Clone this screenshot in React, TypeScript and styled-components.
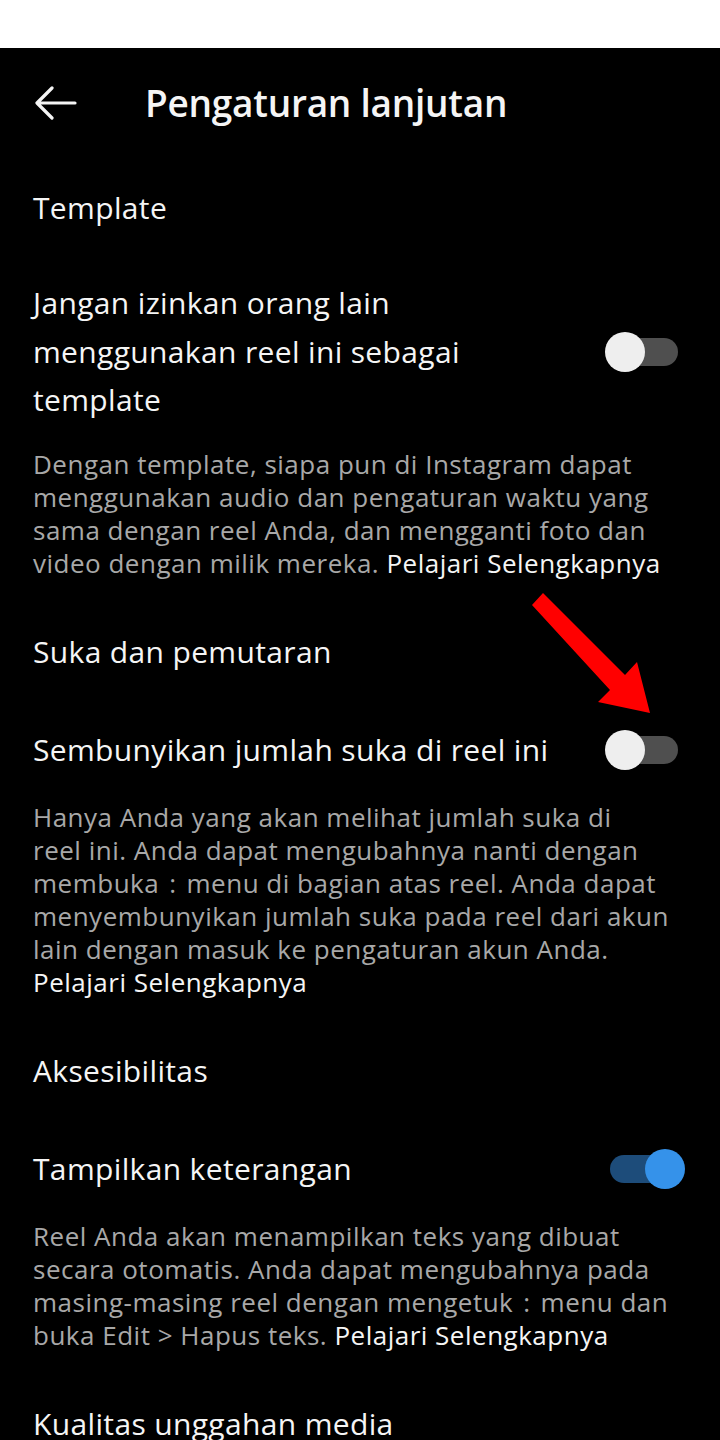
import React from "react";
import styled, { createGlobalStyle } from "styled-components";

const GlobalStyle = createGlobalStyle`
  html, body { margin: 0; padding: 0; background: #000; }
  body { font-family: "Open Sans", Roboto, "Noto Sans", sans-serif; -webkit-font-smoothing: antialiased; }
  * { box-sizing: border-box; }
`;

const Page = styled.div`
  position: relative;
  width: 720px;
  height: 1440px;
  overflow: hidden;
  background: #000;
  color: #f5f5f5;
`;

const StatusBar = styled.div`
  height: 48px;
  background: #fff;
`;

const Header = styled.header`
  height: 109px;
  display: flex;
  align-items: center;
  padding-left: 35px;
  gap: 68px;
`;

const BackButton = styled.button`
  display: flex;
  align-items: center;
  justify-content: center;
  width: 42px;
  height: 34px;
  padding: 0;
  border: 0;
  background: transparent;
  color: #f5f5f5;
`;

const Title = styled.h1`
  margin: 0;
  font-size: 37px;
  font-weight: 600;
  letter-spacing: -0.25px;
  line-height: 48px;
  color: #f5f5f5;
`;

const Content = styled.main`
  padding: 26px 42px 0 33px;
`;

const Section = styled.section`
  display: flex;
  flex-direction: column;
  & + & {
    margin-top: 47px;
  }
`;

const SectionTitle = styled.h2`
  margin: 0 0 47px;
  font-size: 30px;
  font-weight: 400;
  line-height: 49px;
  letter-spacing: 0.35px;
  color: #f5f5f5;
`;

const Row = styled.div`
  display: flex;
  align-items: center;
  justify-content: space-between;
  min-height: 55px;
`;

const Label = styled.div`
  flex: 0 1 527px;
  font-size: 30px;
  line-height: 48.5px;
  letter-spacing: 0.35px;
  color: #f5f5f5;
`;

const Description = styled.p`
  margin: 23px 0 0;
  font-size: 26px;
  line-height: 33px;
  letter-spacing: 0.5px;
  color: #a8a8a8;
`;

const Link = styled.span`
  color: #f5f5f5;
`;

const MenuDots = styled.span`
  display: inline-block;
  margin: 0 10px;
  color: #a8a8a8;
`;

const SwitchTrack = styled.div<{ $on: boolean }>`
  position: relative;
  flex: 0 0 68px;
  width: 68px;
  height: 28px;
  border-radius: 14px;
  background: ${(p) => (p.$on ? "#1d4c7a" : "#4f4f4f")};
`;

const SwitchKnob = styled.div<{ $on: boolean }>`
  position: absolute;
  top: -6px;
  left: ${(p) => (p.$on ? "35px" : "-5px")};
  width: 40px;
  height: 40px;
  border-radius: 50%;
  background: ${(p) => (p.$on ? "#3592ea" : "#eeeeee")};
`;

const Annotation = styled.svg`
  position: absolute;
  left: 0;
  top: 0;
  width: 720px;
  height: 1440px;
  pointer-events: none;
`;

const Switch = ({ on }: { on: boolean }) => (
  <SwitchTrack $on={on} role="switch" aria-checked={on}>
    <SwitchKnob $on={on} />
  </SwitchTrack>
);

const BackIcon = () => (
  <svg width="42" height="34" viewBox="0 0 42 34" fill="none">
    <path
      d="M40 17H3M17 2L2 17l15 15"
      stroke="currentColor"
      strokeWidth="3.2"
      strokeLinecap="round"
      strokeLinejoin="round"
    />
  </svg>
);

export default function App() {
  return (
    <>
      <GlobalStyle />
      <Page>
        <StatusBar />
        <Header>
          <BackButton aria-label="Kembali">
            <BackIcon />
          </BackButton>
          <Title>Pengaturan lanjutan</Title>
        </Header>
        <Content>
          <Section>
            <SectionTitle>Template</SectionTitle>
            <Row>
              <Label>Jangan izinkan orang lain menggunakan reel ini sebagai template</Label>
              <Switch on={false} />
            </Row>
            <Description>
              Dengan template, siapa pun di Instagram dapat menggunakan audio dan pengaturan waktu yang sama
              dengan reel Anda, dan mengganti foto dan video dengan milik mereka. <Link>Pelajari Selengkapnya</Link>
            </Description>
          </Section>
          <Section>
            <SectionTitle>Suka dan pemutaran</SectionTitle>
            <Row>
              <Label>Sembunyikan jumlah suka di reel ini</Label>
              <Switch on={false} />
            </Row>
            <Description>
              Hanya Anda yang akan melihat jumlah suka di
              <br />
              reel ini. Anda dapat mengubahnya nanti dengan membuka
              <MenuDots>:</MenuDots>menu di bagian atas reel. Anda dapat menyembunyikan jumlah suka pada reel dari
              akun lain dengan masuk ke pengaturan akun Anda. <Link>Pelajari Selengkapnya</Link>
            </Description>
          </Section>
          <Section>
            <SectionTitle>Aksesibilitas</SectionTitle>
            <Row>
              <Label>Tampilkan keterangan</Label>
              <Switch on={true} />
            </Row>
            <Description>
              Reel Anda akan menampilkan teks yang dibuat secara otomatis. Anda dapat mengubahnya pada
              masing-masing reel dengan mengetuk<MenuDots>:</MenuDots>menu dan buka Edit &gt; Hapus teks.{" "}
              <Link>Pelajari Selengkapnya</Link>
            </Description>
          </Section>
          <Section>
            <SectionTitle>Kualitas unggahan media</SectionTitle>
          </Section>
        </Content>
        <Annotation viewBox="0 0 720 1440">
          <polygon
            points="543,593 625,675 637,662 650,713 598,702 610,690 532,605"
            fill="#ff0000"
          />
        </Annotation>
      </Page>
    </>
  );
}
